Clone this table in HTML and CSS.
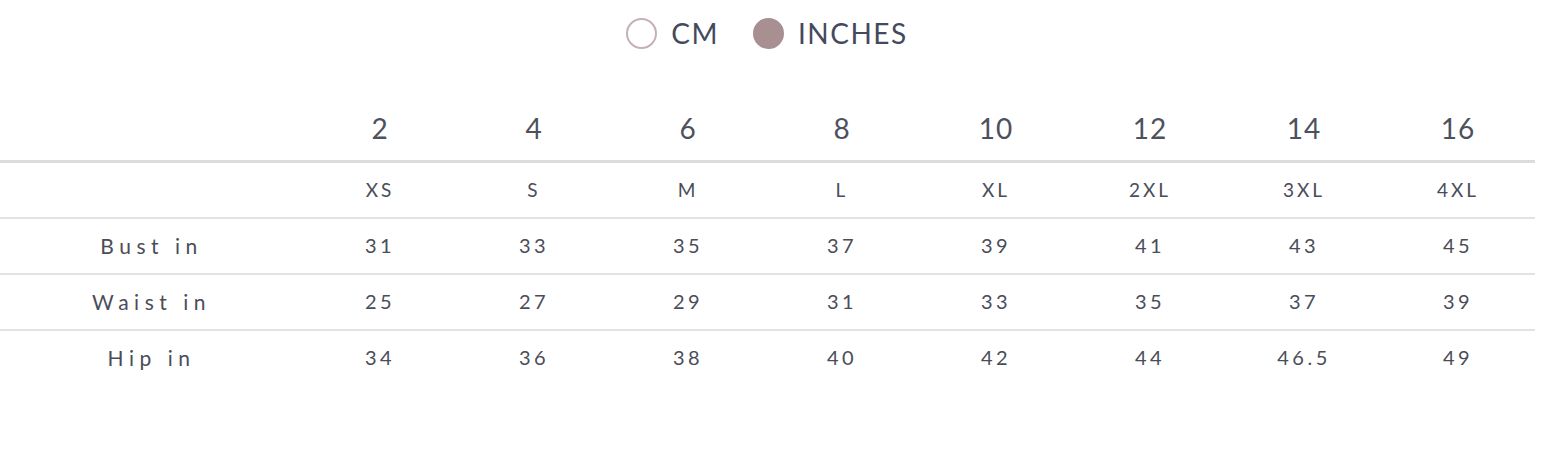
FILE: index.html
```html
<!DOCTYPE html>
<html>
<head>
<meta charset="utf-8">
<link rel="stylesheet" href="styles.css">
</head>
<body>
<div class="units">
  <label class="unit"><span class="radio"></span><span class="unit-label">CM</span></label>
  <label class="unit"><span class="radio checked"></span><span class="unit-label">INCHES</span></label>
</div>
<table class="chart">
  <colgroup>
    <col class="c-label"><col><col><col><col><col><col><col><col>
  </colgroup>
  <thead>
    <tr class="head">
      <th></th><th>2</th><th>4</th><th>6</th><th>8</th><th>10</th><th>12</th><th>14</th><th>16</th>
    </tr>
  </thead>
  <tbody>
    <tr class="sizes">
      <td></td><td>XS</td><td>S</td><td>M</td><td>L</td><td>XL</td><td>2XL</td><td>3XL</td><td>4XL</td>
    </tr>
    <tr>
      <td class="label">Bust in</td><td>31</td><td>33</td><td>35</td><td>37</td><td>39</td><td>41</td><td>43</td><td>45</td>
    </tr>
    <tr>
      <td class="label">Waist in</td><td>25</td><td>27</td><td>29</td><td>31</td><td>33</td><td>35</td><td>37</td><td>39</td>
    </tr>
    <tr class="last">
      <td class="label">Hip in</td><td>34</td><td>36</td><td>38</td><td>40</td><td>42</td><td>44</td><td>46.5</td><td>49</td>
    </tr>
  </tbody>
</table>
</body>
</html>
```
FILE: styles.css
```css
html, body {
  margin: 0;
  padding: 0;
  background: #ffffff;
}
body {
  font-family: "Lato", "Open Sans", sans-serif;
  color: #4f5260;
  width: 1546px;
}
.units {
  display: flex;
  justify-content: center;
  align-items: center;
  gap: 34px;
  height: 66px;
  padding-right: 12px;
  box-sizing: border-box;
}
.unit {
  display: flex;
  align-items: center;
  gap: 14px;
}
.radio {
  width: 27px;
  height: 27px;
  border: 2px solid #c5b1b3;
  border-radius: 50%;
  box-sizing: content-box;
}
.radio.checked {
  background: #a88f91;
  border-color: #a88f91;
}
.unit-label {
  font-size: 28px;
  color: #444a5c;
  letter-spacing: 1.5px;
}
.chart {
  border-collapse: collapse;
  table-layout: fixed;
  width: 1535px;
  margin-top: 30px;
}
.c-label {
  width: 303px;
}
.chart th, .chart td {
  text-align: center;
  padding: 0;
}
.head th {
  font-weight: 400;
  font-size: 28px;
  height: 64px;
  border-bottom: 3px solid #dcdcdc;
  color: #4d515d;
  letter-spacing: 1px;
}
.chart td {
  height: 52px;
  font-size: 20px;
  letter-spacing: 3.5px;
  border-bottom: 2px solid #e2e2e2;
  color: #4a4d59;
  padding-bottom: 2px;
}
.chart .last td {
  border-bottom: none;
}
.sizes td {
  font-size: 19px;
  letter-spacing: 3px;
}
.chart td.label {
  letter-spacing: 5.5px;
  font-size: 21px;
}
```
